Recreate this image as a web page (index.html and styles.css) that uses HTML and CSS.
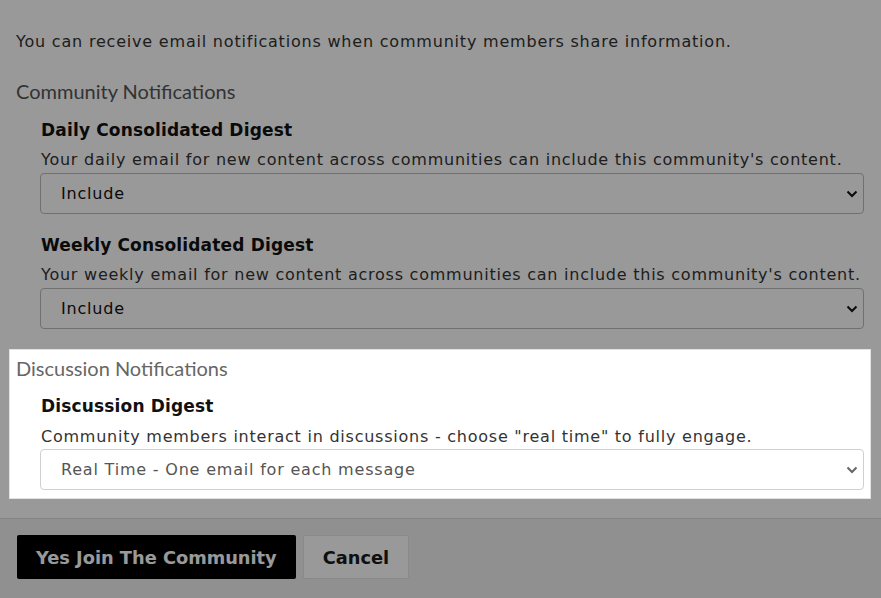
FILE: index.html
```html
<!DOCTYPE html>
<html lang="en">
<head>
    <meta charset="UTF-8">
    <meta name="viewport" content="width=device-width, initial-scale=1.0">
    <title>Join Community</title>
    <link rel="stylesheet" href="styles.css">
</head>
<body>
    <div class="modal">
        <div class="modal-body">
            <p class="intro">You can receive email notifications when community members share information.</p>

            <!-- Community notifications -->
            <div class="group">
                <div class="group-title">Community Notifications</div>

                <div class="field">
                    <label class="field-label" for="daily">Daily Consolidated Digest</label>
                    <div class="field-help">Your daily email for new content across communities can include this community's content.</div>
                    <div class="select-wrap">
                        <select id="daily">
                            <option>Include</option>
                            <option>Exclude</option>
                        </select>
                        <svg class="chevron" width="12" height="8" viewBox="0 0 12 8"><path d="M1.5 1.5 L6 6 L10.5 1.5" fill="none" stroke="currentColor" stroke-width="2"/></svg>
                    </div>
                </div>

                <div class="field">
                    <label class="field-label" for="weekly">Weekly Consolidated Digest</label>
                    <div class="field-help">Your weekly email for new content across communities can include this community's content.</div>
                    <div class="select-wrap">
                        <select id="weekly">
                            <option>Include</option>
                            <option>Exclude</option>
                        </select>
                        <svg class="chevron" width="12" height="8" viewBox="0 0 12 8"><path d="M1.5 1.5 L6 6 L10.5 1.5" fill="none" stroke="currentColor" stroke-width="2"/></svg>
                    </div>
                </div>
            </div>

            <!-- Discussion notifications (highlighted by the tour) -->
            <div class="group highlighted">
                <div class="group-title">Discussion Notifications</div>

                <div class="field">
                    <label class="field-label" for="discussion">Discussion Digest</label>
                    <div class="field-help">Community members interact in discussions - choose "real time" to fully engage.</div>
                    <div class="select-wrap">
                        <select id="discussion">
                            <option>Real Time - One email for each message</option>
                            <option>Daily Digest</option>
                            <option>No Email</option>
                        </select>
                        <svg class="chevron" width="12" height="8" viewBox="0 0 12 8"><path d="M1.5 1.5 L6 6 L10.5 1.5" fill="none" stroke="currentColor" stroke-width="2"/></svg>
                    </div>
                </div>
            </div>
        </div>

        <div class="modal-footer">
            <button class="btn btn-primary">Yes Join The Community</button>
            <button class="btn btn-default">Cancel</button>
        </div>
    </div>

    <div class="overlay"></div>
</body>
</html>
```

FILE: styles.css
```css
/* General page styles */
body {
    font-family: "DejaVu Sans", Verdana, sans-serif;
    margin: 0;
    padding: 0;
    background-color: #fff;
    color: #333;
    height: 100vh;
    overflow: hidden;
}

/* Modal layout */
.modal {
    display: flex;
    flex-direction: column;
    min-height: 100vh;
}

.modal-body {
    padding: 31px 17px 19px 16px;
}

.intro {
    margin: 0 0 27px;
    font-size: 16px;
    line-height: 22px;
    letter-spacing: 0.8px;
}

/* Groups of settings */
.group {
    margin-bottom: 20px;
}

.group-title {
    font-family: Lato, sans-serif;
    font-size: 20px;
    line-height: 22px;
    color: #555;
    margin-bottom: 16px;
}

.field {
    display: flex;
    flex-direction: column;
    padding-left: 24px;
    margin-bottom: 19px;
}

.field:last-child {
    margin-bottom: 0;
}

.field-label {
    font-size: 17px;
    font-weight: bold;
    line-height: 24px;
    letter-spacing: 0.16px;
    color: #111;
    margin-bottom: 7px;
    padding-left: 1px;
}

.field-help {
    font-size: 16px;
    line-height: 22px;
    letter-spacing: 0.76px;
    white-space: nowrap;
    padding-left: 1px;
    margin-bottom: 2px;
}

.select-wrap {
    position: relative;
}

.select-wrap select {
    -webkit-appearance: none;
    appearance: none;
    width: 100%;
    height: 41px;
    padding: 0 20px;
    font-family: "DejaVu Sans", Verdana, sans-serif;
    font-size: 16px;
    letter-spacing: 0.8px;
    color: #111;
    background-color: #fff;
    border: 1px solid #bbb;
    border-radius: 4px;
    outline: none;
}

.chevron {
    position: absolute;
    right: 6px;
    top: 50%;
    transform: translateY(-50%);
    color: #111;
    pointer-events: none;
}

/* Section lifted above the overlay */
.highlighted {
    position: relative;
    z-index: 20;
    background-color: #fff;
    border: 1px solid #e2e2e2;
    margin: 0 -7px;
    padding: 7px 6px 8px;
}

.highlighted .group-title {
    color: #666;
    margin-bottom: 15px;
}

.highlighted .field-label {
    margin-bottom: 8px;
}

.highlighted .field-help {
    margin-bottom: 1px;
}

.highlighted .select-wrap select {
    color: #555;
    border-color: #d0d0d0;
}

.highlighted .chevron {
    color: #666;
}

/* Footer with the actions */
.modal-footer {
    flex-grow: 1;
    background-color: #f0f0f0;
    border-top: 1px solid #dcdcdc;
    padding: 16px 17px;
    display: flex;
    align-items: flex-start;
    gap: 7px;
}

.btn {
    font-family: "DejaVu Sans", Verdana, sans-serif;
    font-size: 17.8px;
    font-weight: bold;
    height: 44px;
    padding: 0 19px;
    border-radius: 2px;
    cursor: pointer;
}

.btn-primary {
    background-color: #000;
    color: #fff;
    border: none;
}

.btn-default {
    background-color: #fff;
    color: #1a1a1a;
    border: 1px solid #e4e4e4;
}

.overlay {
    position: fixed;
    top: 0;
    left: 0;
    right: 0;
    bottom: 0;
    background-color: rgba(0, 0, 0, 0.4);
    z-index: 10;
}
```
